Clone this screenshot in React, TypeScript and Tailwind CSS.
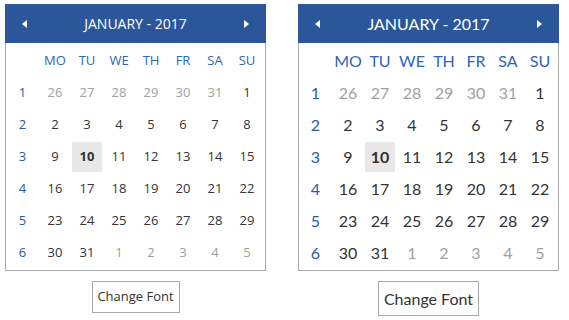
import React from 'react';

type Cell = { n: number; muted?: boolean; today?: boolean };

const weeks: { no: number; days: Cell[] }[] = [
  { no: 1, days: [26, 27, 28, 29, 30, 31].map((n) => ({ n, muted: true } as Cell)).concat([{ n: 1 }]) },
  { no: 2, days: [2, 3, 4, 5, 6, 7, 8].map((n) => ({ n })) },
  { no: 3, days: [9, 10, 11, 12, 13, 14, 15].map((n) => ({ n, today: n === 10 })) },
  { no: 4, days: [16, 17, 18, 19, 20, 21, 22].map((n) => ({ n })) },
  { no: 5, days: [23, 24, 25, 26, 27, 28, 29].map((n) => ({ n })) },
  { no: 6, days: ([{ n: 30 }, { n: 31 }] as Cell[]).concat([1, 2, 3, 4, 5].map((n) => ({ n, muted: true }))) },
];

const dayNames = ['MO', 'TU', 'WE', 'TH', 'FR', 'SA', 'SU'];

const Calendar: React.FC<{ big?: boolean }> = ({ big }) => {
  const font = big
    ? 'font-["Lato","Open_Sans",sans-serif] text-[16px]'
    : 'font-["Open_Sans","Noto_Sans",sans-serif] text-[13px]';

  return (
    <div className={`flex flex-col items-center ${font}`}>
      <div className="w-[261px]">
        {/* Header */}
        <div className="h-[39px] bg-[#2b579a] flex items-center justify-between px-[17px] text-white">
          <svg width="6" height="8" viewBox="0 0 6 8">
            <path d="M5 0 L0 4 L5 8 Z" fill="white" />
          </svg>
          <span className={big ? 'text-[16px]' : 'text-[14px]'}>JANUARY - 2017</span>
          <svg width="6" height="8" viewBox="0 0 6 8">
            <path d="M1 0 L6 4 L1 8 Z" fill="white" />
          </svg>
        </div>

        {/* Body */}
        <div className="border-x border-b border-[#ababab] pt-[2px] pb-[1px] pr-[2px]">
          <div className="flex h-[32px] items-center">
            <div className="w-[33px]" />
            {dayNames.map((d) => (
              <div key={d} className="w-[32px] text-center text-[#2e66b6]">
                {d}
              </div>
            ))}
          </div>
          {weeks.map((w) => (
            <div key={w.no} className="flex h-[32px] items-center">
              <div className="w-[33px] text-center text-[#2b5aa8]">{w.no}</div>
              {w.days.map((c, i) => (
                <div key={i} className="w-[32px] h-[32px] flex items-center justify-center">
                  <div
                    className={`w-[30px] h-[30px] flex items-center justify-center ${
                      c.today ? 'bg-[#e8e8e8] font-bold text-[#333]' : c.muted ? 'text-[#a0a0a0]' : 'text-[#333]'
                    }`}
                  >
                    {c.n}
                  </div>
                </div>
              ))}
            </div>
          ))}
        </div>
      </div>

      <button
        className={`mt-[10px] border border-[#a8a8a8] bg-white text-[#333] flex items-center justify-center ${
          big ? 'w-[101px] h-[35px] text-[16px]' : 'w-[88px] h-[32px] text-[13px]'
        }`}
      >
        Change Font
      </button>
    </div>
  );
};

export default function App() {
  return (
    <div className="w-[569px] h-[320px] bg-white pt-[4px] pl-[5px] flex gap-[32px]">
      <Calendar />
      <Calendar big />
    </div>
  );
}
